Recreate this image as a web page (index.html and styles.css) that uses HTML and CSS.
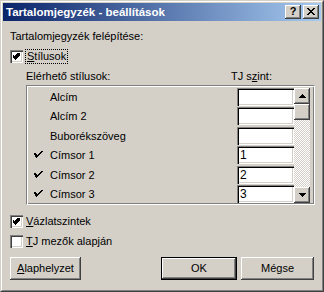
FILE: index.html
```html
<!DOCTYPE html>
<html>
<head>
<meta charset="utf-8">
<link rel="stylesheet" href="styles.css">
</head>
<body>
<div class="win">
  <div class="frame">
    <div class="titlebar">
      <span class="title">Tartalomjegyzék - beállítások</span>
      <div class="tbtns">
        <div class="tb help">?</div>
        <div class="tb close">
          <svg width="8" height="7" viewBox="0 0 8 7" shape-rendering="crispEdges"><path d="M0 0h2v1h1v1h2v-1h1v-1h2v1h-1v1h-1v1h-1v1h1v1h1v1h1v1h-2v-1h-1v-1h-2v1h-1v1h-2v-1h1v-1h1v-1h1v-1h-1v-1h-1v-1h-1z" fill="#000"/></svg>
        </div>
      </div>
    </div>
    <div class="body">
      <div class="heading">Tartalomjegyzék felépítése:</div>
      <div class="chk first">
        <span class="box"><svg width="7" height="7" viewBox="0 0 7 7" shape-rendering="crispEdges"><path d="M6 0h1v3h-1v1h-1v1h-1v1h-1v1h-1v-1h-1v-1h-1v-1h-1v-3h1v1h1v1h1v-1h1v-1h1v-1h1z" fill="#000"/></svg></span>
        <span class="lbl focus"><u>S</u>tílusok</span>
      </div>
      <div class="cols">
        <span>Elérhető stílusok:</span>
        <span class="tjh">TJ s<u>z</u>int:</span>
      </div>
      <div class="list">
        <div class="rows">
          <div class="row"><span class="mark"></span><span class="name">Alcím</span><span class="edit"></span></div>
          <div class="row"><span class="mark"></span><span class="name">Alcím 2</span><span class="edit"></span></div>
          <div class="row"><span class="mark"></span><span class="name">Buborékszöveg</span><span class="edit"></span></div>
          <div class="row"><span class="mark"><svg width="9" height="8" viewBox="0 0 9 8" shape-rendering="crispEdges"><path d="M7 0h2v1h-1v1h-1v1h-1v1h-1v1h-1v1h-1v1h-1v-1h-1v-2h-1v-2h2v1h1v1h1v-1h1v-1h1v-1h1z" fill="#000"/></svg></span><span class="name">Címsor 1</span><span class="edit">1</span></div>
          <div class="row"><span class="mark"><svg width="9" height="8" viewBox="0 0 9 8" shape-rendering="crispEdges"><path d="M7 0h2v1h-1v1h-1v1h-1v1h-1v1h-1v1h-1v1h-1v-1h-1v-2h-1v-2h2v1h1v1h1v-1h1v-1h1v-1h1z" fill="#000"/></svg></span><span class="name">Címsor 2</span><span class="edit">2</span></div>
          <div class="row"><span class="mark"><svg width="9" height="8" viewBox="0 0 9 8" shape-rendering="crispEdges"><path d="M7 0h2v1h-1v1h-1v1h-1v1h-1v1h-1v1h-1v1h-1v-1h-1v-2h-1v-2h2v1h1v1h1v-1h1v-1h1v-1h1z" fill="#000"/></svg></span><span class="name">Címsor 3</span><span class="edit">3</span></div>
        </div>
        <div class="sb">
          <div class="sbtn"><svg width="7" height="4" viewBox="0 0 7 4" shape-rendering="crispEdges"><path d="M3 0h1v1h1v1h1v1h1v1h-7v-1h1v-1h1v-1h1z" fill="#000"/></svg></div>
          <div class="thumb"></div>
          <div class="track"></div>
          <div class="sbtn"><svg width="7" height="4" viewBox="0 0 7 4" shape-rendering="crispEdges"><path d="M0 0h7v1h-1v1h-1v1h-1v1h-1v-1h-1v-1h-1v-1h-1z" fill="#000"/></svg></div>
        </div>
      </div>
      <div class="chk second">
        <span class="box"><svg width="7" height="7" viewBox="0 0 7 7" shape-rendering="crispEdges"><path d="M6 0h1v3h-1v1h-1v1h-1v1h-1v1h-1v-1h-1v-1h-1v-1h-1v-3h1v1h1v1h1v-1h1v-1h1v-1h1z" fill="#000"/></svg></span>
        <span class="lbl"><u>V</u>ázlatszintek</span>
      </div>
      <div class="chk third">
        <span class="box"></span>
        <span class="lbl"><u>T</u>J mezők alapján</span>
      </div>
      <div class="buttons">
        <div class="btn reset"><u>A</u>laphelyzet</div>
        <div class="spacer"></div>
        <div class="btn default">OK</div>
        <div class="btn cancel">Mégse</div>
      </div>
    </div>
  </div>
</div>
</body>
</html>
```
FILE: styles.css
```css
html, body {
  margin: 0;
  padding: 0;
  background: #d4d0c8;
}
body {
  font-family: "Liberation Sans", Arial, sans-serif;
  font-size: 11px;
  line-height: 13px;
  color: #000;
}
.win {
  width: 324px;
  height: 292px;
  box-sizing: border-box;
  border: 1px solid;
  border-color: #d4d0c8 #404040 #404040 #d4d0c8;
  background: #d4d0c8;
}
.frame {
  height: 100%;
  box-sizing: border-box;
  border: 1px solid;
  border-color: #fff #808080 #808080 #fff;
  padding: 1px;
  display: flex;
  flex-direction: column;
}
.titlebar {
  height: 18px;
  flex: none;
  background: linear-gradient(to right, #0a246a, #a6caf0);
  display: flex;
  align-items: center;
  padding-left: 3px;
}
.title {
  color: #fff;
  font-weight: bold;
  font-size: 11.5px;
  flex: 1;
  white-space: nowrap;
}
.tbtns {
  display: flex;
  gap: 2px;
  padding-right: 2px;
}
.tb {
  width: 16px;
  height: 14px;
  box-sizing: border-box;
  background: #d4d0c8;
  box-shadow: inset -1px -1px 0 #404040, inset 1px 1px 0 #fff, inset -2px -2px 0 #808080;
  display: flex;
  align-items: center;
  justify-content: center;
  font-weight: bold;
  font-size: 11px;
  line-height: 11px;
}
.tb.help { padding-bottom: 1px; }
.tb.close svg { display: block; margin-top: -1px; }
.body {
  flex: 1;
  padding: 9px 7px 0 7px;
  display: flex;
  flex-direction: column;
}
.heading {
  height: 13px;
}
.chk {
  display: flex;
  align-items: center;
  height: 13px;
}
.chk.first { margin-top: 7px; }
.chk.second { margin-top: 10px; }
.chk.third { margin-top: 7px; }
.box {
  width: 13px;
  height: 13px;
  box-sizing: border-box;
  background: #fff;
  box-shadow: inset 1px 1px 0 #808080, inset 2px 2px 0 #404040, inset -1px -1px 0 #fff, inset -2px -2px 0 #d4d0c8;
  display: flex;
  align-items: flex-start;
  justify-content: flex-start;
  flex: none;
}
.box svg { display: block; margin: 3px 0 0 3px; }
.lbl {
  margin-left: 3px;
  white-space: nowrap;
}
.lbl.focus {
  outline: 1px dotted #000;
  outline-offset: 0;
  padding: 0 1px;
  margin-left: 3px;
}
.cols {
  display: flex;
  justify-content: space-between;
  margin-top: 7px;
  padding-left: 16px;
  padding-right: 42px;
  height: 13px;
}
.list {
  margin-top: 2px;
  margin-left: 16px;
  width: 289px;
  height: 120px;
  box-sizing: border-box;
  border: 1px solid #808080;
  border-right-color: #fff;
  border-bottom-color: #fff;
  box-shadow: inset 1px 1px 0 #fff, inset -1px -1px 0 #808080;
  padding: 2px 4px 1px 1px;
  display: flex;
}
.rows {
  flex: 1;
  display: grid;
  grid-auto-rows: 19.4px;
}
.row {
  display: flex;
  align-items: flex-start;
}
.mark {
  width: 22px;
  height: 18px;
  display: flex;
  align-items: center;
  padding-left: 6px;
  box-sizing: border-box;
}
.mark svg { display: block; }
.name {
  flex: 1;
  height: 18px;
  line-height: 18px;
}
.edit {
  width: 57px;
  height: 18px;
  box-sizing: border-box;
  background: #fff;
  box-shadow: inset 1px 1px 0 #808080, inset 2px 2px 0 #000, inset -1px -1px 0 #fff, inset -2px -2px 0 #d4d0c8;
  padding: 3px 0 0 3px;
  line-height: 13px;
  font-size: 12px;
}
.sb {
  width: 16px;
  display: flex;
  flex-direction: column;
}
.sbtn, .thumb {
  height: 16px;
  flex: none;
  background: #d4d0c8;
  box-shadow: inset -1px -1px 0 #404040, inset 1px 1px 0 #fff, inset -2px -2px 0 #808080;
  display: flex;
  align-items: center;
  justify-content: center;
}
.track {
  flex: 1;
  background-color: #fff;
  background-image: repeating-conic-gradient(#d4d0c8 0 25%, #fff 0 50%);
  background-size: 2px 2px;
}
.buttons {
  display: flex;
  margin-top: 9px;
  gap: 4px;
}
.spacer { flex: 1; }
.btn {
  height: 23px;
  box-sizing: border-box;
  background: #d4d0c8;
  box-shadow: inset -1px -1px 0 #404040, inset 1px 1px 0 #fff, inset -2px -2px 0 #808080;
  display: flex;
  align-items: center;
  justify-content: center;
}
.btn.reset { width: 71px; }
.btn.default {
  width: 76px;
  box-shadow: inset 0 0 0 1px #000, inset -2px -2px 0 #404040, inset 2px 2px 0 #fff, inset -3px -3px 0 #808080;
}
.btn.cancel { width: 73px; }
```
